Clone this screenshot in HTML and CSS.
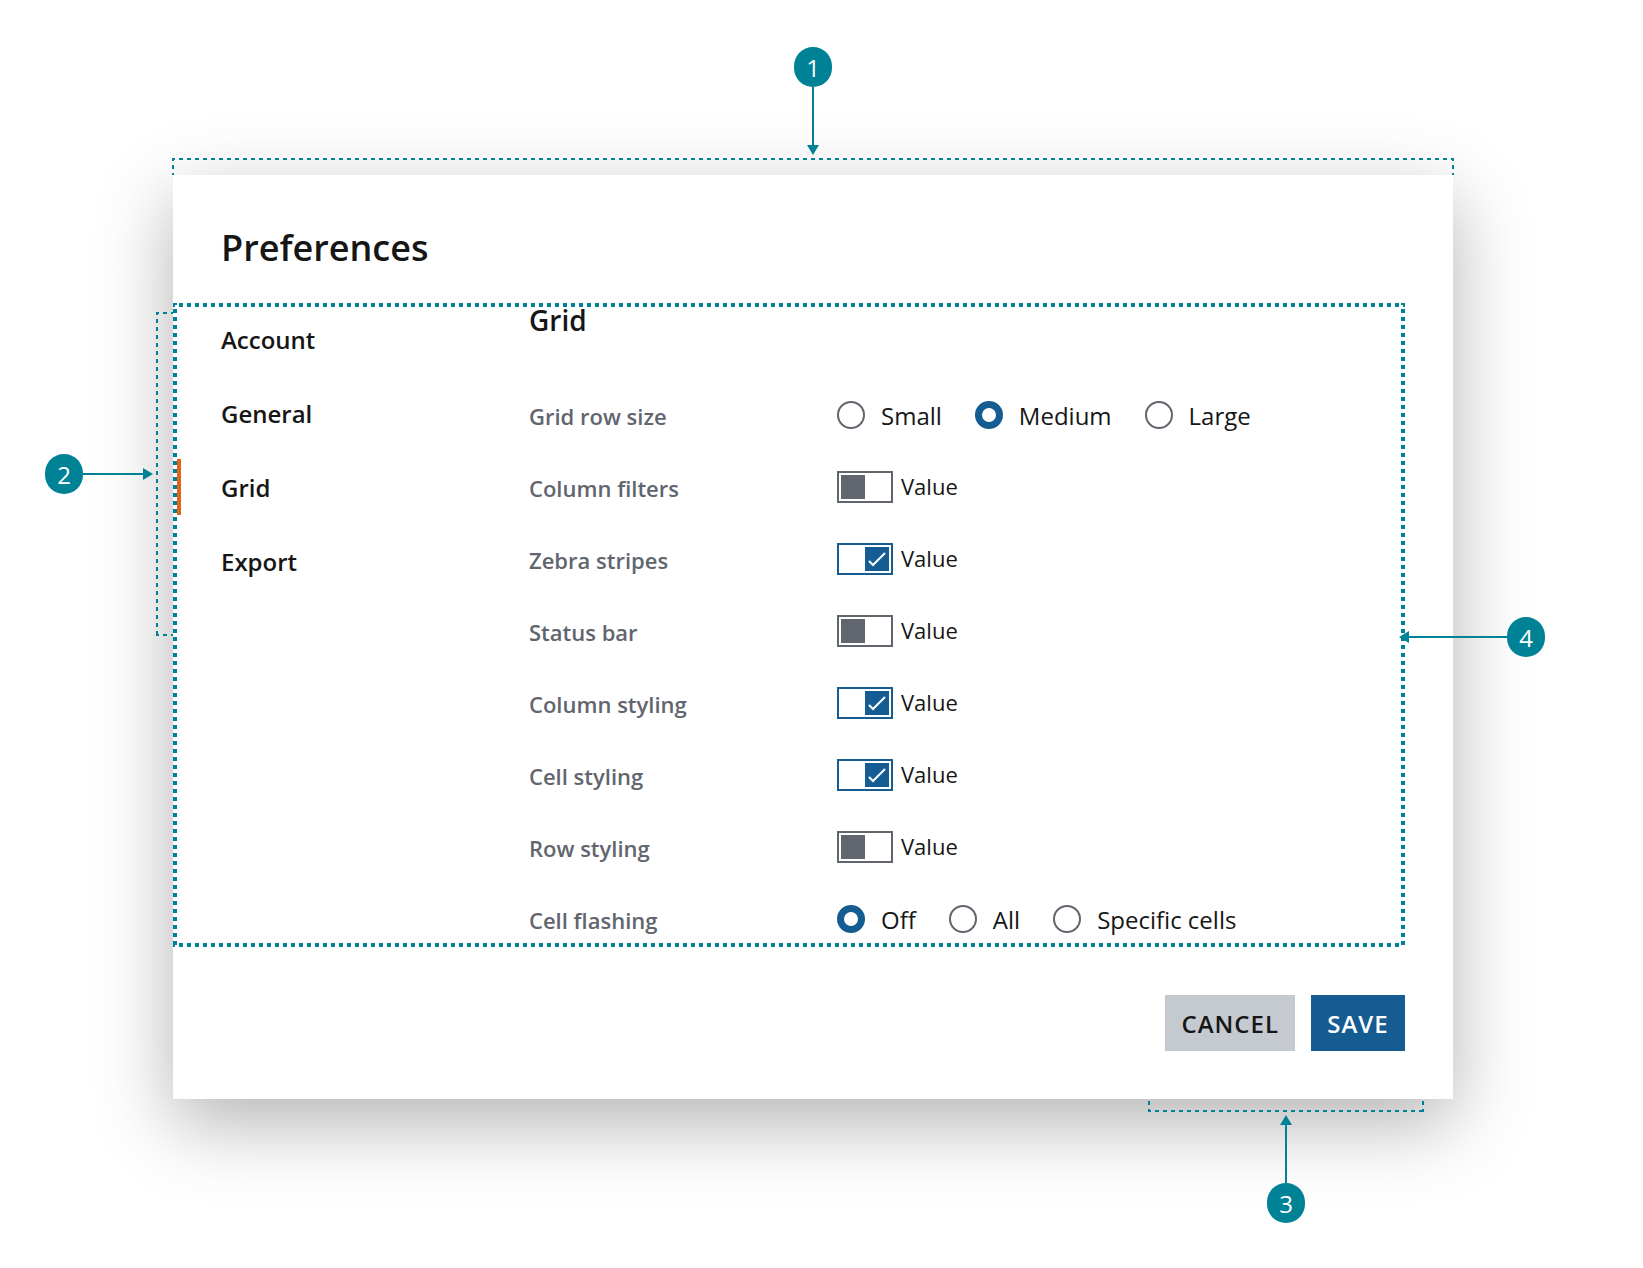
FILE: index.html
```html
<!DOCTYPE html>
<html lang="en">
<head>
<meta charset="utf-8">
<title>Preferences</title>
<link rel="stylesheet" href="styles.css">
</head>
<body>
<main class="page">
  <section class="dialog" role="dialog" aria-labelledby="dialog-title">
    <header class="dialog-header">
      <h1 class="dialog-title" id="dialog-title">Preferences</h1>
    </header>

    <div class="dialog-body">
      <nav class="nav">
        <a class="nav-item" href="#account">Account</a>
        <a class="nav-item" href="#general">General</a>
        <a class="nav-item nav-item-active" href="#grid" aria-current="page">Grid</a>
        <a class="nav-item" href="#export">Export</a>
      </nav>

      <form class="settings" id="grid">
        <h2 class="settings-title">Grid</h2>
        <div class="rows">
          <div class="row" role="radiogroup" aria-labelledby="row-size">
            <span class="row-label" id="row-size">Grid row size</span>
            <div class="options">
              <label class="option"><input class="radio" type="radio" name="size"><span class="option-text">Small</span></label>
              <label class="option"><input class="radio" type="radio" name="size" checked><span class="option-text">Medium</span></label>
              <label class="option"><input class="radio" type="radio" name="size"><span class="option-text">Large</span></label>
            </div>
          </div>
          <div class="row">
            <span class="row-label" id="filters">Column filters</span>
            <label class="switch"><input class="toggle" type="checkbox" aria-describedby="filters"><span class="switch-text">Value</span></label>
          </div>
          <div class="row">
            <span class="row-label" id="zebra">Zebra stripes</span>
            <label class="switch"><input class="toggle" type="checkbox" aria-describedby="zebra" checked><svg class="check" viewBox="0 0 24 24"><path d="M4 14l4 4L20 6"/></svg><span class="switch-text">Value</span></label>
          </div>
          <div class="row">
            <span class="row-label" id="status">Status bar</span>
            <label class="switch"><input class="toggle" type="checkbox" aria-describedby="status"><span class="switch-text">Value</span></label>
          </div>
          <div class="row">
            <span class="row-label" id="column-styling">Column styling</span>
            <label class="switch"><input class="toggle" type="checkbox" aria-describedby="column-styling" checked><svg class="check" viewBox="0 0 24 24"><path d="M4 14l4 4L20 6"/></svg><span class="switch-text">Value</span></label>
          </div>
          <div class="row">
            <span class="row-label" id="cell-styling">Cell styling</span>
            <label class="switch"><input class="toggle" type="checkbox" aria-describedby="cell-styling" checked><svg class="check" viewBox="0 0 24 24"><path d="M4 14l4 4L20 6"/></svg><span class="switch-text">Value</span></label>
          </div>
          <div class="row">
            <span class="row-label" id="row-styling">Row styling</span>
            <label class="switch"><input class="toggle" type="checkbox" aria-describedby="row-styling"><span class="switch-text">Value</span></label>
          </div>
          <div class="row" role="radiogroup" aria-labelledby="flashing">
            <span class="row-label" id="flashing">Cell flashing</span>
            <div class="options">
              <label class="option"><input class="radio" type="radio" name="flash" checked><span class="option-text">Off</span></label>
              <label class="option"><input class="radio" type="radio" name="flash"><span class="option-text">All</span></label>
              <label class="option"><input class="radio" type="radio" name="flash"><span class="option-text">Specific cells</span></label>
            </div>
          </div>
        </div>
      </form>

      <svg class="outline" aria-hidden="true">
        <line x1="0" y1="2" x2="100%" y2="2"/>
        <line x1="2" y1="0" x2="2" y2="100%"/>
        <svg class="outline-far">
          <line x1="0" y1="100%" x2="100%" y2="100%"/>
          <line x1="100%" y1="0" x2="100%" y2="100%"/>
        </svg>
      </svg>
    </div>

    <footer class="dialog-footer">
      <button class="button button-secondary" type="button">CANCEL</button>
      <button class="button button-primary" type="button">SAVE</button>
    </footer>

    <!-- Brackets around the annotated regions -->
    <svg class="bracket bracket-top" aria-hidden="true">
      <line x1="0" y1="0" x2="100%" y2="0"/>
      <line class="leg" x1="0" y1="-1" x2="0" y2="100%"/>
      <line class="leg" x1="100%" y1="-1" x2="100%" y2="100%"/>
    </svg>
    <svg class="bracket bracket-left" aria-hidden="true">
      <line x1="0" y1="0" x2="0" y2="100%"/>
      <line class="leg" x1="-1" y1="0" x2="100%" y2="0"/>
      <line class="leg" x1="-1" y1="100%" x2="100%" y2="100%"/>
    </svg>
    <svg class="bracket bracket-bottom" aria-hidden="true">
      <line x1="0" y1="0" x2="100%" y2="0"/>
      <line class="leg" x1="0" y1="-1" x2="0" y2="100%"/>
      <line class="leg" x1="100%" y1="-1" x2="100%" y2="100%"/>
    </svg>

    <!-- Numbered callouts -->
    <div class="callout callout-1"><span class="badge">1</span><span class="stem"></span><svg class="head" viewBox="0 0 12 10"><path d="M0 0h12L6 10z"/></svg></div>
    <div class="callout callout-2"><span class="badge">2</span><span class="stem"></span><svg class="head" viewBox="0 0 10 12"><path d="M0 0v12L10 6z"/></svg></div>
    <div class="callout callout-3"><svg class="head" viewBox="0 0 12 10"><path d="M0 10h12L6 0z"/></svg><span class="stem"></span><span class="badge">3</span></div>
    <div class="callout callout-4"><svg class="head" viewBox="0 0 10 12"><path d="M10 0v12L0 6z"/></svg><span class="stem"></span><span class="badge">4</span></div>
  </section>
</main>
</body>
</html>
```

FILE: styles.css
```css
:root {
  --teal: #008296;
  --blue: #155c93;
  --gray: #61656e;
  --text: #161616;
}

* {
  box-sizing: border-box;
}

body {
  margin: 0;
  background: #fff;
  color: var(--text);
  font-family: "Open Sans", "Noto Sans", sans-serif;
  font-size: 24px;
  line-height: 32px;
}

.page {
  padding: 175px 190px 168px 173px;
}

.dialog {
  position: relative;
  background: #fff;
  box-shadow: 0 24px 72px rgba(0, 0, 0, 0.3);
}

.dialog-header {
  padding: 48px 48px 30px;
}

.dialog-title {
  margin: 0;
  font-size: 36px;
  font-weight: 600;
  line-height: 50px;
}

.dialog-body {
  position: relative;
  display: grid;
  grid-template-columns: 356px 1fr;
  margin-right: 48px;
}

.nav {
  display: flex;
  flex-direction: column;
  gap: 18px;
  padding: 8px 4px;
}

.nav-item {
  padding: 13px 40px 11px;
  border-left: 4px solid transparent;
  color: inherit;
  font-weight: 600;
  text-decoration: none;
}

.nav-item-active {
  border-left-color: #e06519;
}

.settings-title {
  margin: 0 0 50px;
  font-size: 28px;
  font-weight: 600;
  line-height: 34px;
}

.rows {
  display: flex;
  flex-direction: column;
  gap: 16px;
}

.row {
  display: grid;
  grid-template-columns: 308px 1fr;
  align-items: center;
  height: 56px;
}

.row-label {
  padding-top: 2px;
  color: var(--gray);
  font-size: 22px;
  font-weight: 600;
}

.options {
  display: flex;
  gap: 33px;
}

.option {
  display: flex;
  align-items: center;
  gap: 16px;
}

.option-text {
  padding-top: 2px;
}

.radio,
.toggle {
  flex: none;
  margin: 0;
  appearance: none;
  background: #fff;
  border: 2px solid var(--gray);
}

.radio {
  width: 28px;
  height: 28px;
  border-radius: 50%;
}

.radio:checked {
  border: 7px solid var(--blue);
}

.switch {
  position: relative;
  display: flex;
  align-items: center;
  gap: 8px;
}

.switch-text {
  padding-bottom: 2px;
  font-size: 22px;
}

.toggle {
  display: flex;
  width: 56px;
  height: 32px;
  padding: 2px;
}

.toggle::before {
  content: "";
  width: 24px;
  height: 24px;
  background: var(--gray);
}

.toggle:checked {
  justify-content: flex-end;
  border-color: var(--blue);
}

.toggle:checked::before {
  background: var(--blue);
}

.check {
  position: absolute;
  left: 28px;
  width: 24px;
  height: 24px;
  fill: none;
  stroke: #fff;
  stroke-width: 2;
}

.dialog-footer {
  display: flex;
  justify-content: flex-end;
  gap: 16px;
  padding: 48px;
}

.button {
  min-width: 94px;
  height: 56px;
  padding: 2px 16px 0;
  border: 0;
  font: inherit;
  font-weight: 600;
  letter-spacing: 1px;
}

.button-secondary {
  background: #c5c9d0;
  color: var(--text);
}

.button-primary {
  background: var(--blue);
  color: #fff;
}

.outline,
.bracket {
  position: absolute;
  stroke: var(--teal);
  stroke-width: 2;
  stroke-dasharray: 4;
  stroke-dashoffset: 2;
  pointer-events: none;
}

.outline {
  inset: 0;
  width: 100%;
  height: 100%;
  stroke-width: 4;
}

.outline-far {
  width: calc(100% - 2px);
  height: calc(100% - 2px);
  overflow: visible;
}

.bracket {
  overflow: visible;
}

.leg {
  stroke-dashoffset: 1;
}

.bracket-top {
  top: -16px;
  left: 0;
  width: 100%;
  height: 16px;
}

.bracket-left {
  top: 138px;
  left: -16px;
  width: 16px;
  height: 322px;
}

.bracket-bottom {
  top: calc(100% + 2px);
  right: 30px;
  width: 274px;
  height: 10px;
  transform: scaleY(-1);
}

.callout {
  position: absolute;
  display: flex;
  align-items: center;
}

.badge {
  flex: none;
  width: 38px;
  height: 40px;
  border-radius: 19px;
  background: var(--teal);
  color: #fff;
  line-height: 42px;
  text-align: center;
}

.stem {
  flex: 1;
  background: var(--teal);
}

.head {
  flex: none;
  fill: var(--teal);
}

.callout-1,
.callout-3 {
  flex-direction: column;
  width: 38px;
  height: 108px;
}

.callout-1 .stem,
.callout-3 .stem {
  width: 2px;
}

.callout-1 .head,
.callout-3 .head {
  width: 12px;
  height: 10px;
}

.callout-2 .stem,
.callout-4 .stem {
  height: 2px;
}

.callout-2 .head,
.callout-4 .head {
  width: 10px;
  height: 12px;
}

.callout-1 {
  bottom: calc(100% + 20px);
  left: calc(50% - 19px);
}

.callout-2 {
  top: 279px;
  right: calc(100% + 20px);
  width: 108px;
}

.callout-3 {
  top: calc(100% + 16px);
  right: 148px;
}

.callout-4 {
  top: 442px;
  left: calc(100% - 54px);
  width: 146px;
}
```
